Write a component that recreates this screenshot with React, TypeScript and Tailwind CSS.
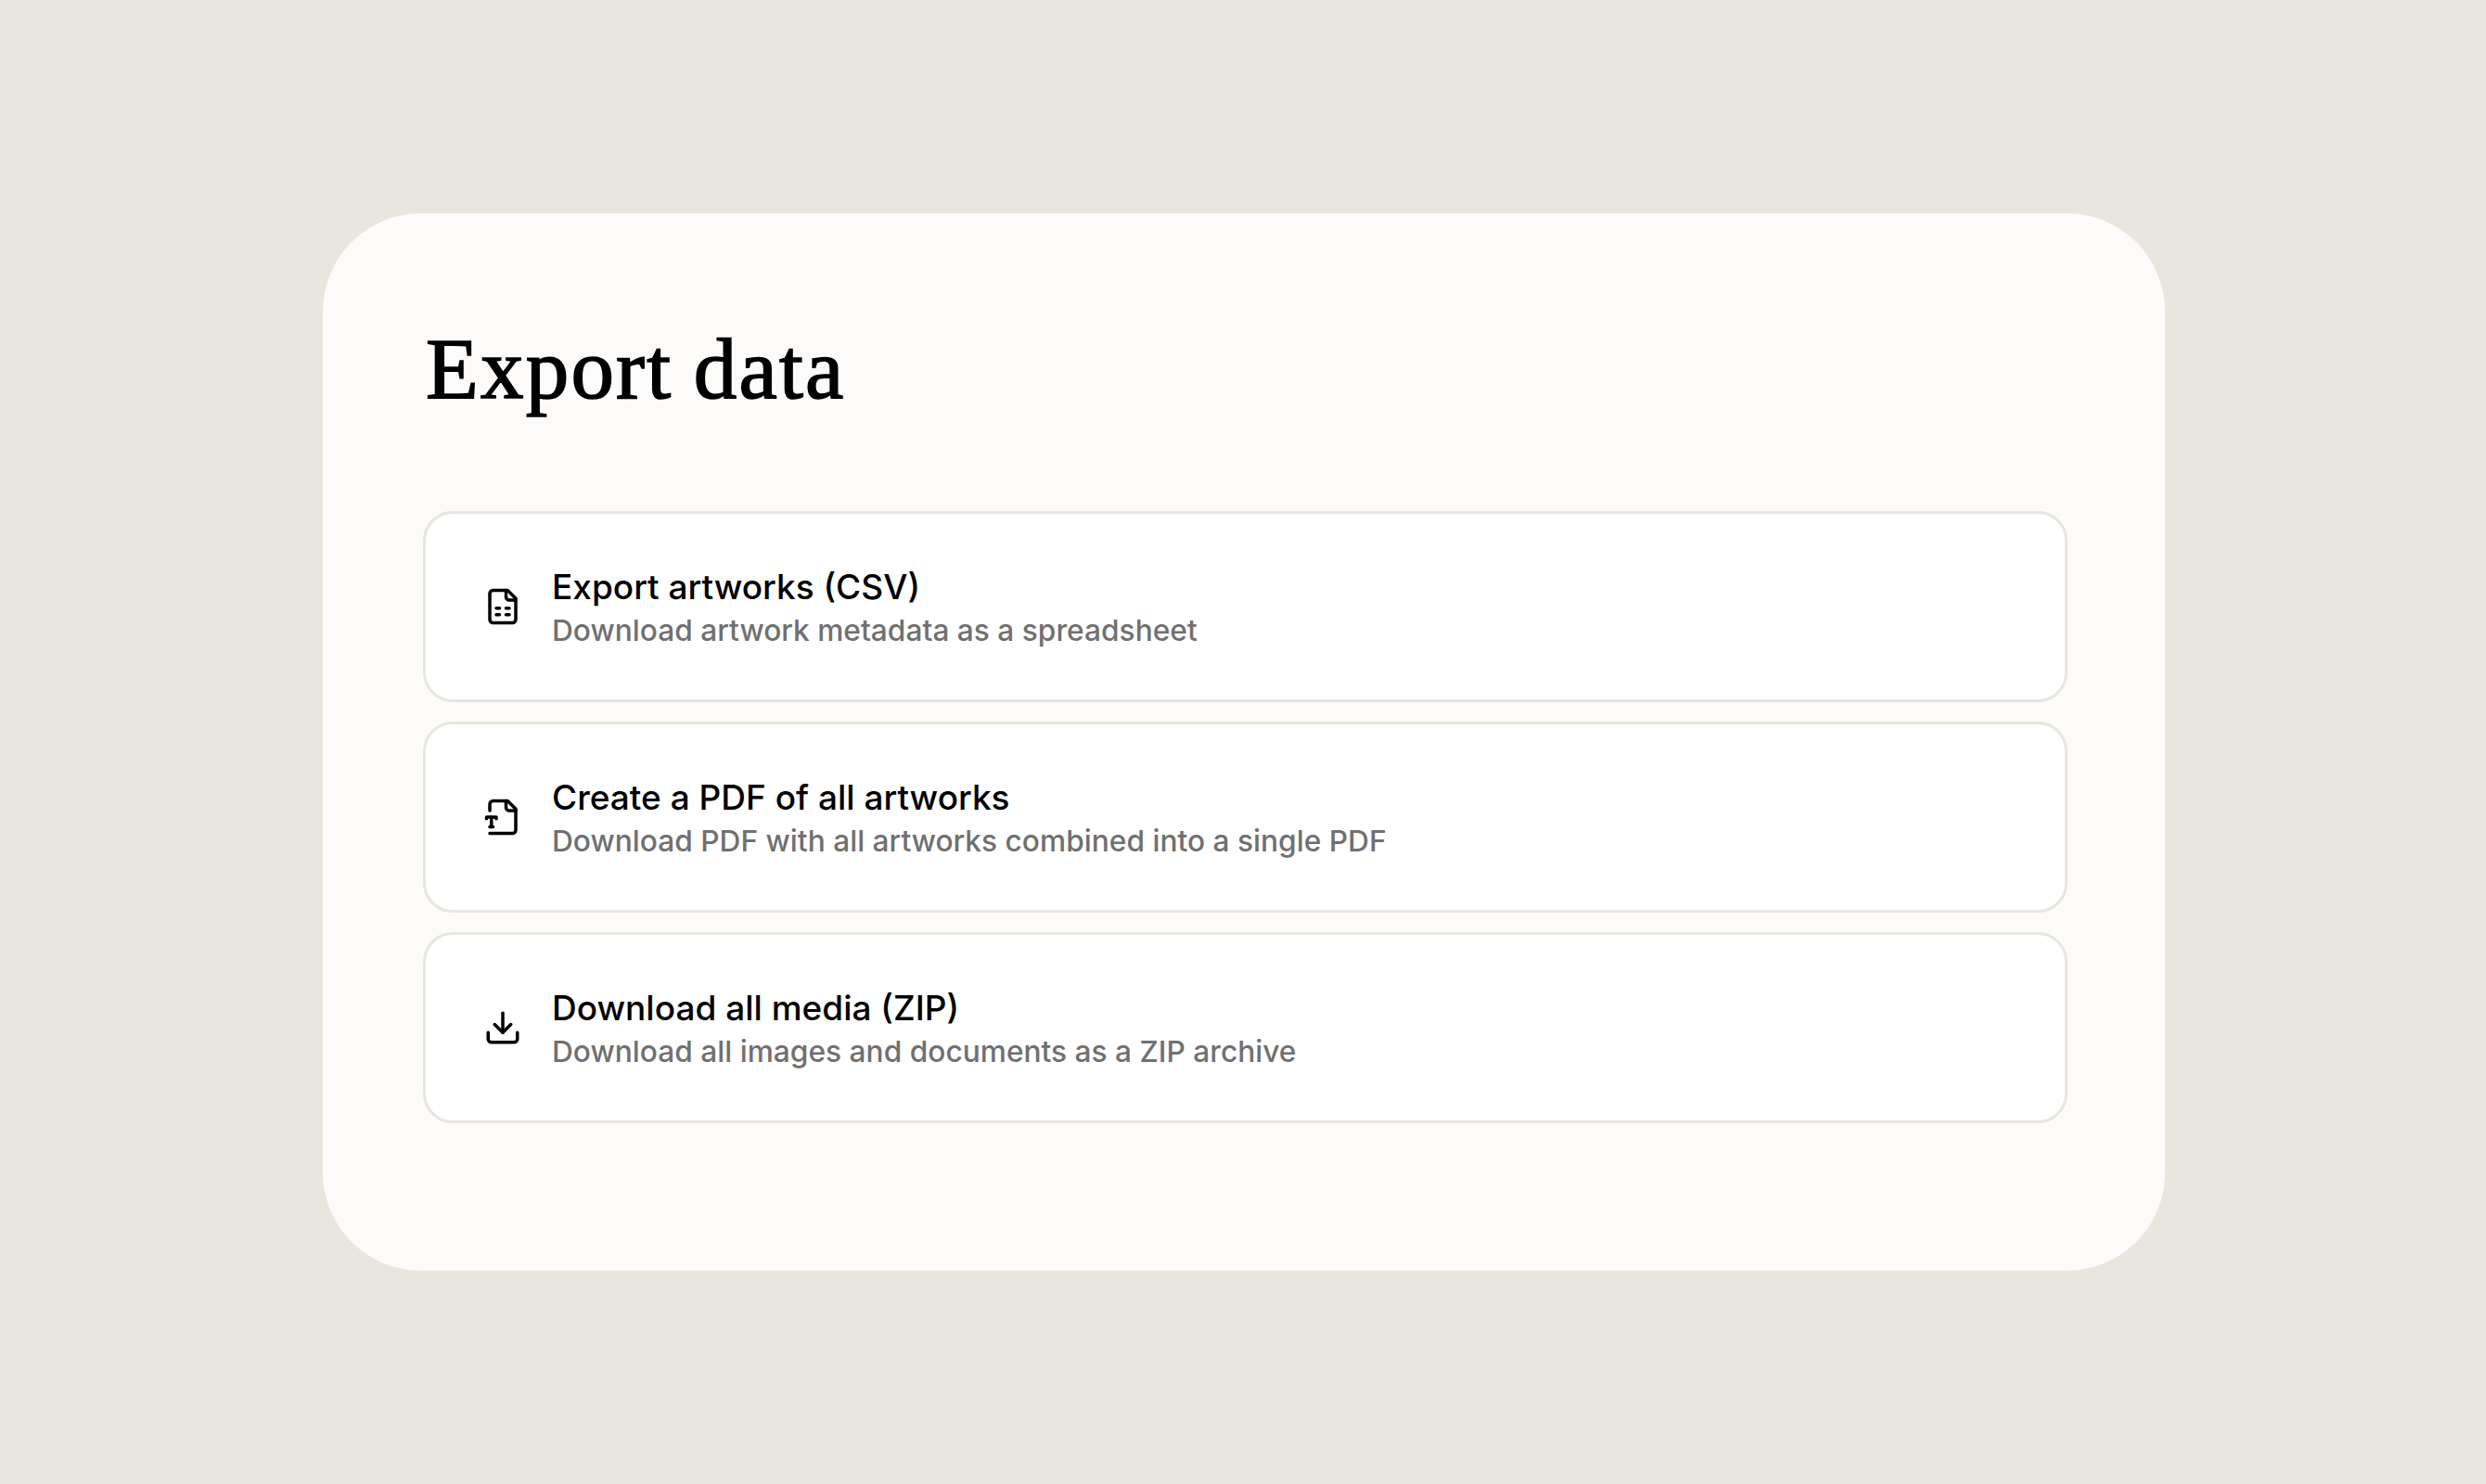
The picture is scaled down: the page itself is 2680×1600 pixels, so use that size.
import type { ReactNode } from "react";

interface ExportOption {
  title: string;
  description: string;
  icon: ReactNode;
}

const options: ExportOption[] = [
  {
    title: "Export artworks (CSV)",
    description: "Download artwork metadata as a spreadsheet",
    icon: (
      <>
        <path d="M15 2H6a2 2 0 0 0-2 2v16a2 2 0 0 0 2 2h12a2 2 0 0 0 2-2V7Z" />
        <path d="M14 2v4a2 2 0 0 0 2 2h4" />
        <path d="M8 13h2" />
        <path d="M14 13h2" />
        <path d="M8 17h2" />
        <path d="M14 17h2" />
      </>
    ),
  },
  {
    title: "Create a PDF of all artworks",
    description: "Download PDF with all artworks combined into a single PDF",
    icon: (
      <>
        <path d="M4 22h14a2 2 0 0 0 2-2V7l-5-5H6a2 2 0 0 0-2 2v4" />
        <path d="M14 2v4a2 2 0 0 0 2 2h4" />
        <path d="M2 13v-1h6v1" />
        <path d="M5 12v6" />
        <path d="M4 18h2" />
      </>
    ),
  },
  {
    title: "Download all media (ZIP)",
    description: "Download all images and documents as a ZIP archive",
    icon: (
      <>
        <path d="M21 15v4a2 2 0 0 1-2 2H5a2 2 0 0 1-2-2v-4" />
        <path d="m7 10 5 5 5-5" />
        <path d="M12 15V3" />
      </>
    ),
  },
];

function ExportButton({ title, description, icon }: ExportOption) {
  return (
    <button
      type="button"
      className="flex h-[206px] w-full items-center gap-8 rounded-[32px] border-[3px] border-[#e7e7df] bg-white px-[62px] text-left"
    >
      <svg
        viewBox="0 0 24 24"
        fill="none"
        stroke="currentColor"
        strokeWidth={2}
        strokeLinecap="round"
        strokeLinejoin="round"
        className="size-[42px] shrink-0 text-black"
        aria-hidden="true"
      >
        {icon}
      </svg>
      <span className="flex flex-col pt-0.5">
        <span className="font-medium text-[37px] text-black leading-[48px]">
          {title}
        </span>
        <span className="font-medium text-[#707070] text-[31.7px] leading-[45px]">
          {description}
        </span>
      </span>
    </button>
  );
}

export default function App() {
  return (
    <main className="flex h-[1600px] items-center justify-center bg-[#e7e7df] pl-0.5 font-['Inter',sans-serif]">
      <section className="h-[1140px] w-[1986px] rounded-[106px] bg-[#fcfbf9] pt-[113px] pr-[105px] pl-[108px]">
        <h1 className="pl-[3px] font-['Liberation_Serif',serif] text-[93px] text-black leading-[110px] tracking-[2.2px] [-webkit-text-stroke:1.6px_black] [word-spacing:-3px]">
          Export data
        </h1>
        <div className="mt-[98px] flex flex-col gap-[21px]">
          {options.map((option) => (
            <ExportButton key={option.title} {...option} />
          ))}
        </div>
      </section>
    </main>
  );
}
